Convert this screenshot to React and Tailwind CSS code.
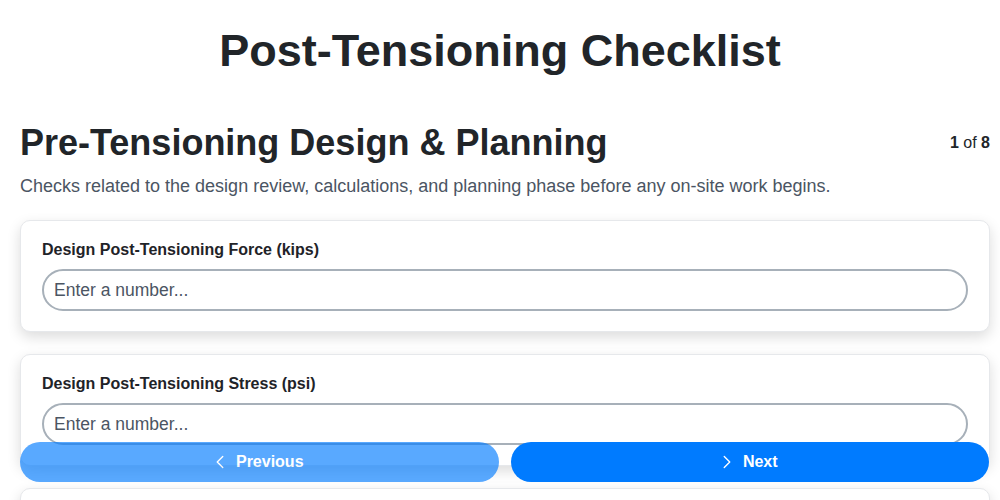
import React from 'react';
import { ChevronLeft, ChevronRight } from 'lucide-react';

const FIELDS = [
  { id: 'force', label: 'Design Post-Tensioning Force (kips)' },
  { id: 'stress', label: 'Design Post-Tensioning Stress (psi)' },
  { id: 'losses', label: 'Estimated Prestress Losses (%)' },
];

const FieldCard = ({ field }) => (
  <div className="bg-white border border-[#e6e8eb] rounded-[10px] shadow-[0_5px_14px_rgba(0,0,0,0.14)] px-[21px] pt-5 pb-5">
    <label htmlFor={field.id} className="block text-[16px] font-bold text-[#1f2328] leading-[18px] mb-[10px]">
      {field.label}
    </label>
    <input
      id={field.id}
      type="number"
      placeholder="Enter a number..."
      className="w-full h-[42px] rounded-full border-2 border-[#a7b0b9] px-[10px] text-[17.5px] text-[#212529] placeholder:text-[#4b5563] outline-none"
    />
  </div>
);

export default function App() {
  return (
    <div className="min-h-screen bg-white text-[#212529] font-['Liberation_Sans',Arial,sans-serif] pb-24">
      <h1 className="text-center text-[45px] font-bold leading-none pt-[28px]">Post-Tensioning Checklist</h1>

      <div className="pl-5 pr-[10px]">
        <div className="mt-[48px] flex items-start justify-between">
          <h2 className="text-[36px] font-bold leading-[43px]">Pre-Tensioning Design &amp; Planning</h2>
          <div className="pt-[10px] text-[16px]">
            <span className="font-bold">1</span> of <span className="font-bold">8</span>
          </div>
        </div>
        <p className="mt-[9px] text-[18px] leading-[27px] text-[#4b5563]">
          Checks related to the design review, calculations, and planning phase before any on-site work begins.
        </p>

        <div className="mt-[20px] flex flex-col gap-[22px]">
          {FIELDS.map((f) => (
            <FieldCard key={f.id} field={f} />
          ))}
        </div>
      </div>

      <div className="fixed left-5 right-[11px] bottom-[18px] grid grid-cols-2 gap-3">
        <button
          disabled
          className="h-10 rounded-full bg-[#007bff] opacity-65 text-white font-bold text-[16px] flex items-center justify-center gap-[5px] pr-[6px]"
        >
          <ChevronLeft size={22} strokeWidth={1.5} />
          Previous
        </button>
        <button className="h-10 rounded-full bg-[#007bff] text-white font-bold text-[16px] flex items-center justify-center gap-[5px] pr-[6px]">
          <ChevronRight size={22} strokeWidth={1.5} />
          Next
        </button>
      </div>
    </div>
  );
}
